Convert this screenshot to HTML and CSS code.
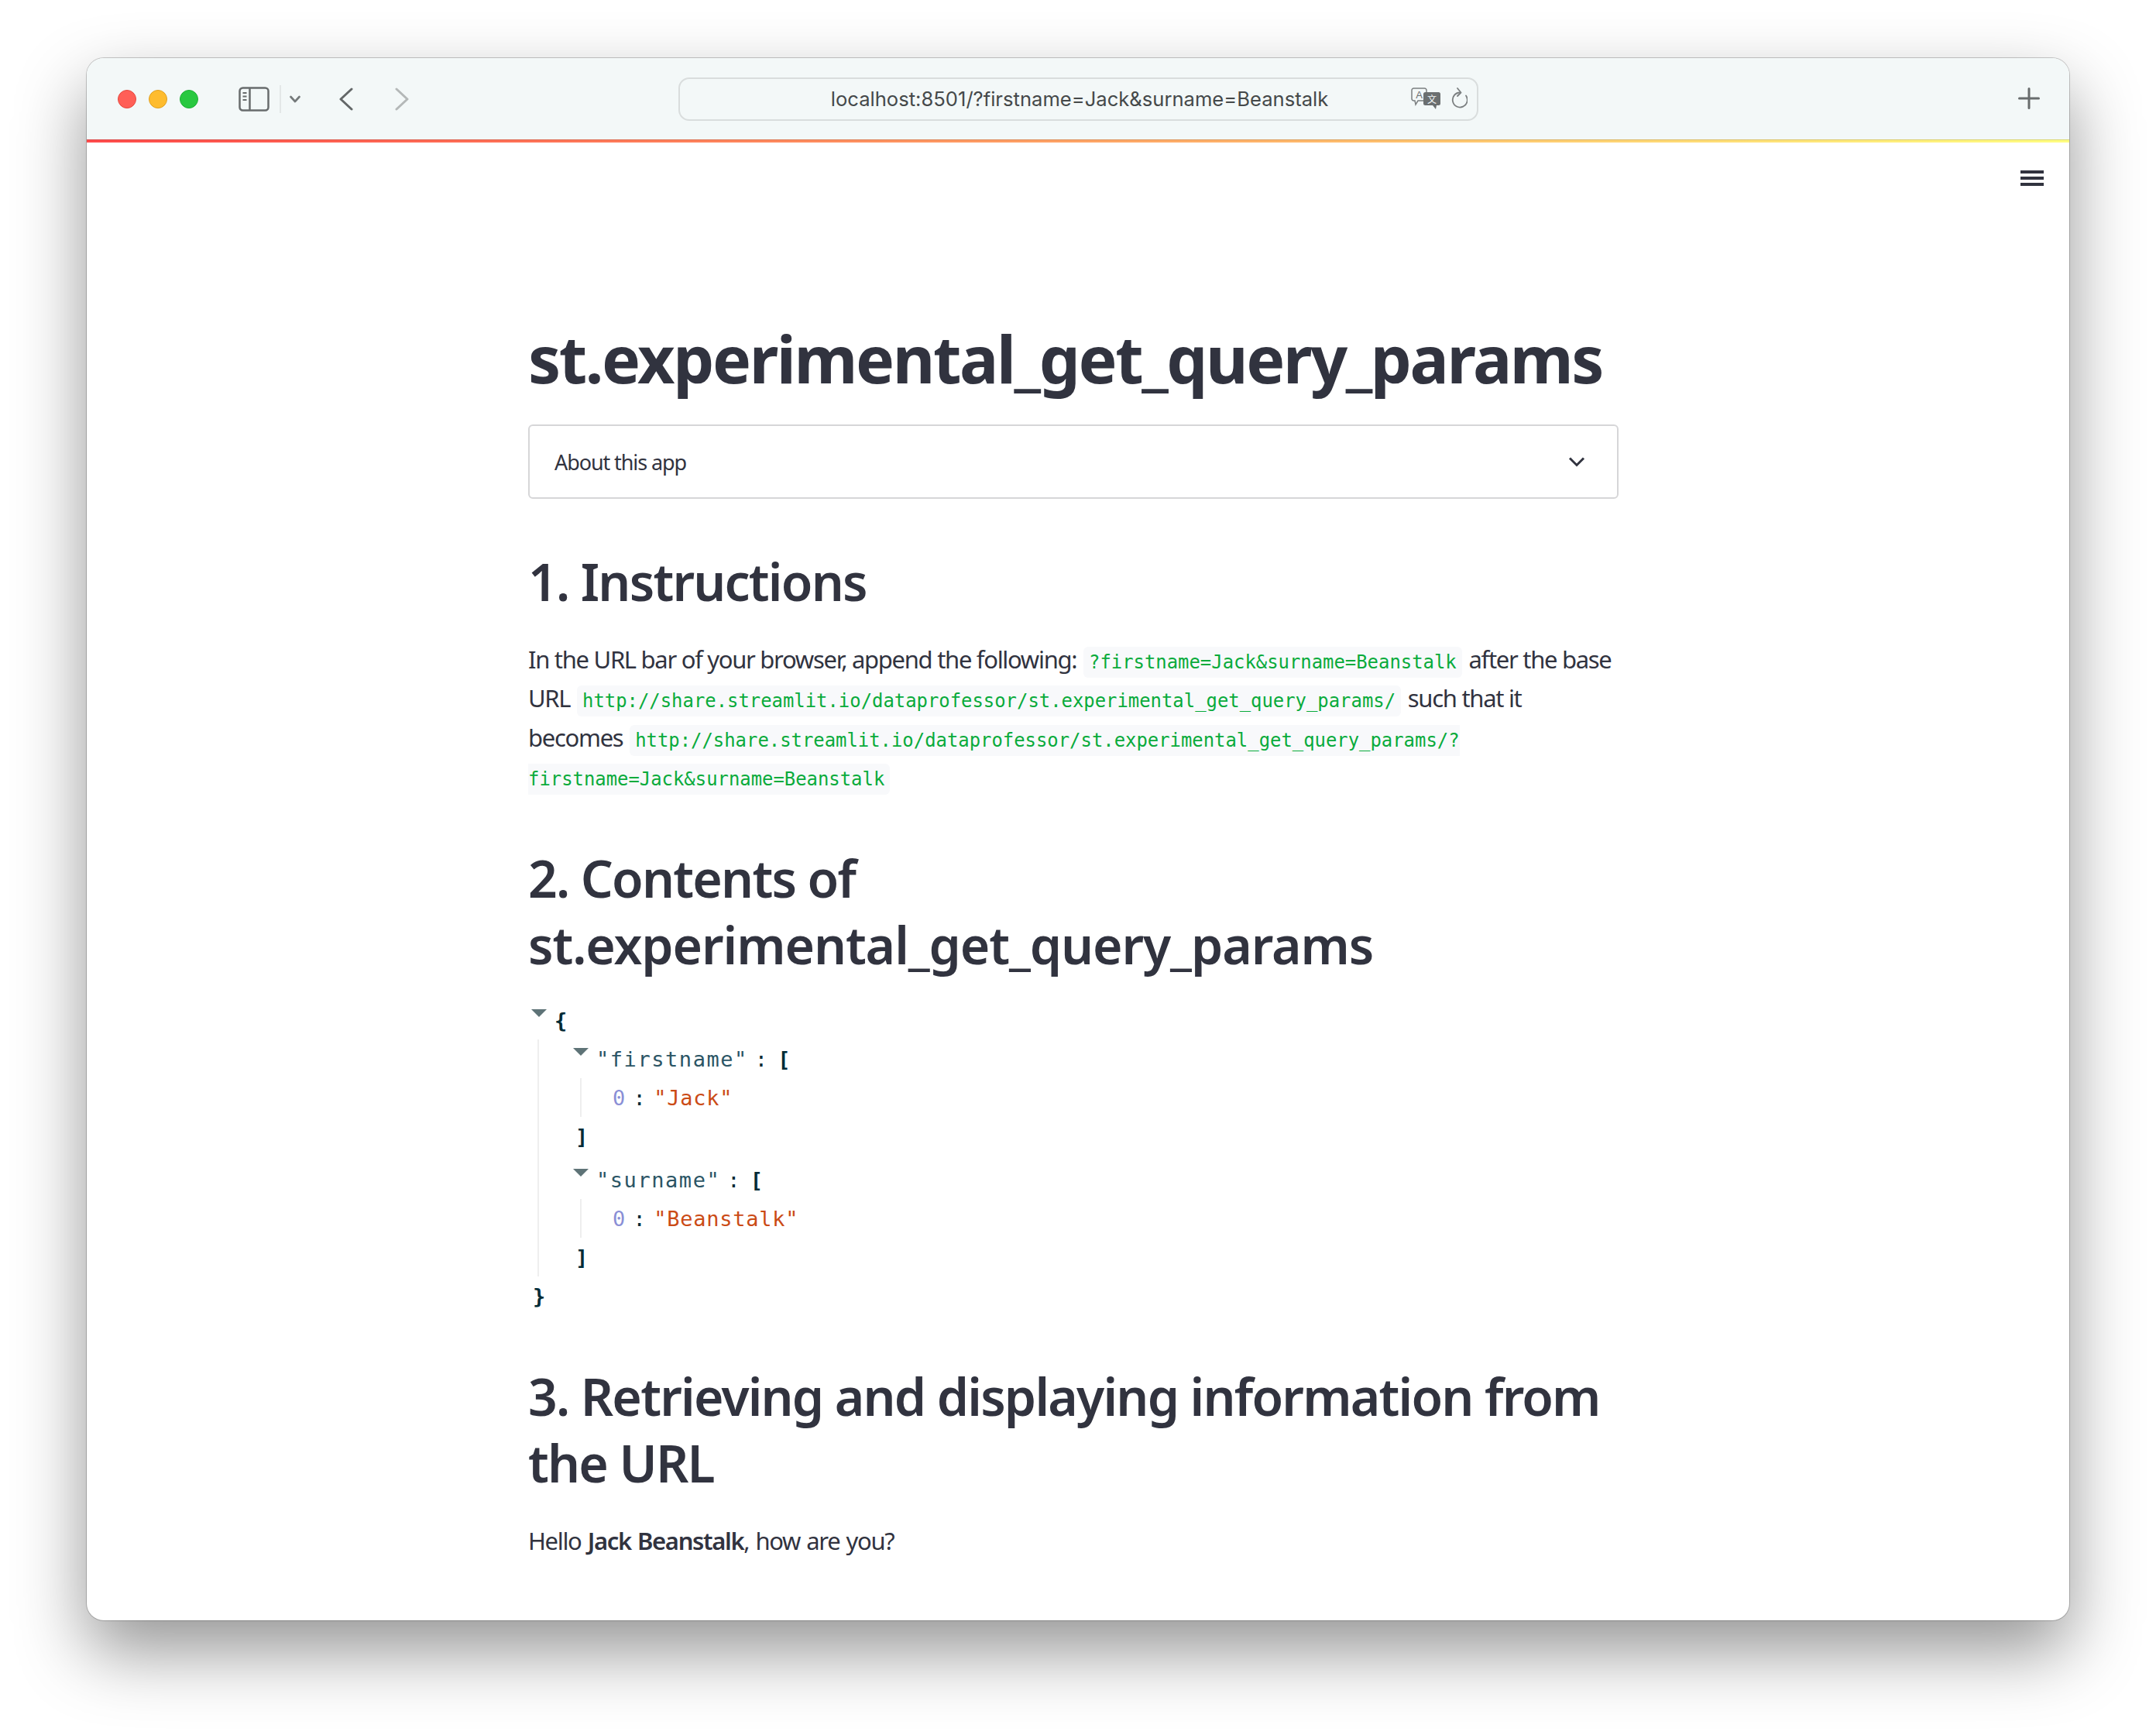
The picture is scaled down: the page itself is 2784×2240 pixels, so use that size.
FILE: index.html
```html
<!DOCTYPE html>
<html lang="en">
<head>
  <meta charset="UTF-8" />
  <title>st.experimental_get_query_params</title>
  <link rel="stylesheet" href="styles.css">
</head>
<body>
  <div class="window">
    <header class="toolbar">
      <div class="toolbar-left">
        <span class="light red"></span>
        <span class="light yellow"></span>
        <span class="light green"></span>
        <svg class="sidebar-icon" width="40" height="32" viewBox="0 0 40 32" fill="none" stroke="#686c6d" stroke-width="2.5">
          <rect x="1.5" y="1.5" width="37" height="29" rx="4" />
          <path d="M14.5 2v28" />
          <path d="M5.5 8h5M5.5 12.500h5M5.500 17h5" stroke-width="2" />
        </svg>
        <span class="tool-sep"></span>
        <svg class="small-chevron" width="14" height="10" viewBox="0 0 14 10" fill="none" stroke="#74797a" stroke-width="2.600" stroke-linecap="round" stroke-linejoin="round">
          <path d="M1.500 2l5.500 6 5.500-6" />
        </svg>
        <svg class="nav-back" width="18" height="30" viewBox="0 0 18 30" fill="none" stroke="#636768" stroke-width="3" stroke-linecap="round" stroke-linejoin="round">
          <path d="M16 2L2 15l14 13" />
        </svg>
        <svg class="nav-forward" width="18" height="30" viewBox="0 0 18 30" fill="none" stroke="#b4b8b8" stroke-width="3" stroke-linecap="round" stroke-linejoin="round">
          <path d="M2 2l14 13L2 28" />
        </svg>
      </div>
      <div class="address">
        <span class="url">localhost:8501/?firstname=Jack&amp;surname=Beanstalk</span>
        <svg class="translate-icon" width="38" height="28" viewBox="0 0 38 28">
          <path d="M3.500 1h14a2.500 2.500 0 0 1 2.500 2.500v11a2.500 2.500 0 0 1-2.500 2.500H9l-3 5-1-5H3.500A2.500 2.500 0 0 1 1 14.500v-11A2.500 2.500 0 0 1 3.500 1z" fill="#f3f8f8" stroke="#7b7f80" stroke-width="1.500" />
          <text class="translate-a" x="10.500" y="14">A</text>
          <path d="M18.500 6h17a2.500 2.500 0 0 1 2.500 2.500v12a2.500 2.500 0 0 1-2.500 2.500H33l-1 5-4-5h-9.500a2.500 2.500 0 0 1-2.500-2.500v-12A2.500 2.500 0 0 1 18.500 6z" fill="#6b6f70" />
          <text class="translate-b" x="27" y="19.500">文</text>
        </svg>
        <svg class="reload-icon" width="22" height="28" viewBox="0 0 22 28" fill="none" stroke="#7b7f80" stroke-width="1.800" stroke-linecap="round" stroke-linejoin="round">
          <path d="M12 6.500a9.500 9.500 0 1 0 8 4" />
          <path d="M9 1l4.500 5.500L9 11" />
        </svg>
      </div>
      <div class="toolbar-right">
        <svg width="28" height="28" viewBox="0 0 28 28" fill="none" stroke="#686c6d" stroke-width="3" stroke-linecap="round">
          <path d="M14 1.500v25M1.500 14h25" />
        </svg>
      </div>
    </header>
    <div class="decoration"></div>

    <div class="page">
      <div class="hamburger"><span></span><span></span><span></span></div>
      <main class="content">
        <h1>st.experimental_get_query_params</h1>

        <div class="expander">
          <span>About this app</span>
          <svg width="22" height="14" viewBox="0 0 22 14" fill="none" stroke="#31333f" stroke-width="3">
            <path d="M2 2.500l9 9 9-9" />
          </svg>
        </div>

        <h2 class="first-heading">1. Instructions</h2>
        <p class="instructions">In the URL bar of your browser, append the following: <code>?firstname=Jack&amp;surname=Beanstalk</code> after the base<br>URL <code>http://share.streamlit.io/dataprofessor/st.experimental_get_query_params/</code> such that it<br>becomes <code>http://share.streamlit.io/dataprofessor/st.experimental_get_query_params/?<br>firstname=Jack&amp;surname=Beanstalk</code></p>

        <h2>2. Contents of<br><span class="param-name">st.experimental_get_query_params</span></h2>

        <div class="json">
          <div class="row"><i class="caret"></i><b>{</b></div>
          <div class="children">
            <div class="row"><i class="caret"></i><span class="key">"firstname"</span><span class="colon">:</span><b>[</b></div>
            <div class="items">
              <div class="row"><span class="num">0</span><span class="colon-item">:</span><span class="str">"Jack"</span></div>
            </div>
            <div class="row close-inner"><b>]</b></div>
            <div class="row next-key"><i class="caret"></i><span class="key">"surname"</span><span class="colon">:</span><b>[</b></div>
            <div class="items">
              <div class="row"><span class="num">0</span><span class="colon-item">:</span><span class="str">"Beanstalk"</span></div>
            </div>
            <div class="row close-inner"><b>]</b></div>
          </div>
          <div class="row close-outer"><b>}</b></div>
        </div>

        <h2 class="third-heading">3. Retrieving and displaying information from<br>the URL</h2>
        <p class="hello">Hello <strong>Jack Beanstalk</strong>, how are you?</p>
      </main>
    </div>
  </div>
</body>
</html>
```

FILE: styles.css
```css
html, body {
  margin: 0;
  padding: 0;
}

body {
  background: #ffffff;
  width: 2784px;
  height: 2240px;
  padding: 75px 112px 148px;
  box-sizing: border-box;
  font-family: "Noto Sans", sans-serif;
  color: #31333f;
  overflow: hidden;
}

.window {
  height: 2017px;
  background: #ffffff;
  border-radius: 22px;
  overflow: hidden;
  box-shadow: 0 0 0 1px rgba(0, 0, 0, 0.2), 0 40px 90px rgba(0, 0, 0, 0.42);
  display: flex;
  flex-direction: column;
}

.toolbar {
  height: 105px;
  flex: none;
  background: #f3f8f8;
  display: grid;
  grid-template-columns: 1fr 1033px 1fr;
  align-items: center;
}

.toolbar-left {
  display: flex;
  align-items: center;
  padding-left: 40px;
}

.light {
  width: 24px;
  height: 24px;
  border-radius: 50%;
  margin-right: 16px;
  box-sizing: border-box;
}

.red { background: #ff5f57; border: 1px solid #e5493f; }
.yellow { background: #febc2e; border: 1px solid #e0a020; }
.green { background: #28c840; border: 1px solid #1eae34; }

.sidebar-icon {
  margin-left: 36px;
}

.tool-sep {
  width: 2px;
  height: 36px;
  background: #e3e7e7;
  margin-left: 13px;
}

.small-chevron {
  margin-left: 11px;
}

.nav-back {
  margin-left: 50px;
}

.nav-forward {
  margin-left: 54px;
}

.address {
  height: 56px;
  box-sizing: border-box;
  border: 2px solid #d9dddd;
  border-radius: 14px;
  display: flex;
  align-items: center;
  position: relative;
  justify-content: center;
}

.url {
  font-family: Inter, sans-serif;
  font-size: 25.600px;
  color: #45494a;
  margin-left: 4px;
}

.translate-icon {
  position: absolute;
  right: 47px;
  top: 11px;
}

.translate-a {
  font-family: "Liberation Sans", sans-serif;
  font-size: 13px;
  fill: #6b6f70;
  text-anchor: middle;
}

.translate-b {
  font-family: "Noto Sans CJK SC", sans-serif;
  font-size: 12px;
  fill: #f3f8f8;
  text-anchor: middle;
}

.reload-icon {
  position: absolute;
  right: 12px;
  top: 11px;
}

.toolbar-right {
  display: flex;
  justify-content: flex-end;
  padding: 0 38px 2px 0;
}

.decoration {
  height: 4px;
  flex: none;
  background: linear-gradient(90deg, #ff4b4b, #fffd80);
  box-shadow: inset 0 1px 0 rgba(0, 0, 0, 0.14);
}

.page {
  flex: 1;
  position: relative;
  display: flex;
  justify-content: center;
  padding-right: 12px;
}

.hamburger {
  position: absolute;
  top: 36px;
  right: 33px;
  width: 30px;
  display: flex;
  flex-direction: column;
  gap: 4px;
}

.hamburger span {
  height: 4px;
  background: #31333f;
}

.content {
  width: 1408px;
  padding-top: 229px;
}

h1 {
  margin: 0 0 35px;
  font-size: 84px;
  line-height: 100px;
  font-weight: 700;
  letter-spacing: -2.400px;
  white-space: nowrap;
}

h2 {
  margin: 63px 0 0;
  font-size: 66px;
  line-height: 86px;
  font-weight: 600;
  letter-spacing: -1.800px;
  white-space: nowrap;
}

.param-name {
  letter-spacing: -1.100px;
}

.first-heading {
  margin-top: 63px;
}

.third-heading {
  margin-top: 60px;
}

.expander {
  height: 96px;
  box-sizing: border-box;
  border: 2px solid #d6d6d8;
  border-radius: 6px;
  display: flex;
  align-items: center;
  justify-content: space-between;
  padding: 0 41px 0 32px;
  font-size: 27px;
  letter-spacing: -1.100px;
}

p {
  margin: 0;
  font-size: 31px;
  line-height: 50.300px;
  letter-spacing: -1.300px;
  white-space: nowrap;
}

strong {
  font-weight: 600;
}

.instructions {
  margin-top: 33px;
}

.hello {
  margin-top: 33px;
  letter-spacing: -1.350px;
  word-spacing: 1.500px;
}

code {
  font-family: "DejaVu Sans Mono", monospace;
  font-size: 23.900px;
  line-height: 1;
  letter-spacing: 0;
  color: #09ab3b;
  background: #f8f9fb;
  padding: 6px 7px;
  border-radius: 6px;
  margin: 0 2px;
}

.json {
  margin-top: 30px;
  font-family: "DejaVu Sans Mono", monospace;
  font-size: 27px;
  letter-spacing: 1.150px;
  color: #002b36;
}

.row {
  height: 50px;
  display: flex;
  align-items: center;
  white-space: pre;
}

.row b {
  font-weight: 700;
}

.caret {
  flex: none;
  align-self: flex-start;
  width: 0;
  height: 0;
  margin: 11px 10px 0 0;
  border-left: 10px solid transparent;
  border-right: 10px solid transparent;
  border-top: 10px solid #5e7377;
}

.json > .row:first-child {
  padding-left: 4px;
}

.children {
  margin-left: 12px;
  padding-left: 44px;
  border-left: 2px solid #eeeeee;
}

.items {
  margin-left: 9px;
  padding-left: 40px;
  border-left: 2px solid #eeeeee;
}

.key {
  color: #2b5565;
  letter-spacing: 1.550px;
}

.colon {
  margin: 0 12px 0 9px;
}

.colon-item {
  margin: 0 9.500px 0 9px;
}

.num {
  color: #8a8fd6;
}

.str {
  color: #cb4b16;
  letter-spacing: 0.750px;
}

.close-inner {
  padding-left: 3px;
}

.close-outer {
  padding-left: 6px;
}

.next-key {
  margin-top: 6px;
}

.third-heading {
  margin-top: 61px;
}
```
